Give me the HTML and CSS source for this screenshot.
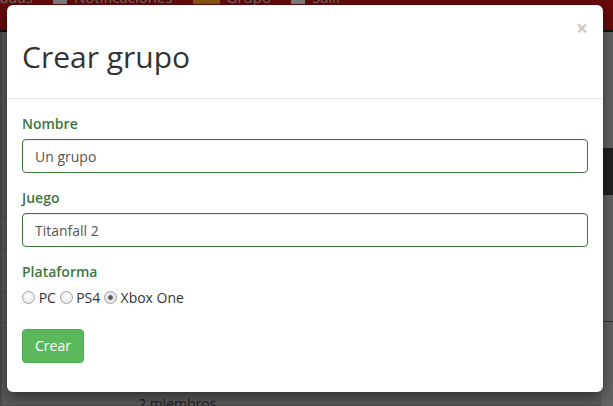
FILE: index.html
```html
<!DOCTYPE html>
<html lang="es">
<head>
<meta charset="utf-8">
<title>Crear grupo</title>
<link rel="stylesheet" href="styles.css">
</head>
<body>
<div class="page">
  <nav class="navbar">
    <ul class="nav-items">
      <li>adas</li>
      <li><span class="ico"></span>Notificaciones</li>
      <li><span class="ico gold"></span>Grupo</li>
      <li><span class="ico"></span>Salir</li>
    </ul>
  </nav>
  <div class="content">
    <div class="rows">
      <div class="row r1"></div>
      <div class="row r2"></div>
      <div class="row r3"></div>
      <div class="row r4"></div>
      <div class="row r5"><span class="members">2 miembros</span></div>
    </div>
    <div class="side">
      <div class="side-block"></div>
      <div class="side-line"></div>
    </div>
  </div>
</div>

<div class="modal">
  <div class="modal-header">
    <button class="close" type="button">&times;</button>
    <h2 class="modal-title">Crear grupo</h2>
  </div>
  <div class="modal-body">
    <div class="form-group">
      <label class="label">Nombre</label>
      <input class="form-control" type="text" value="Un grupo">
    </div>
    <div class="form-group">
      <label class="label">Juego</label>
      <input class="form-control" type="text" value="Titanfall 2">
    </div>
    <div class="form-group last">
      <label class="label">Plataforma</label>
      <div class="radios">
        <input type="radio" name="p"> PC <input type="radio" name="p"> PS4 <input type="radio" name="p" checked> Xbox One
      </div>
    </div>
    <button class="btn" type="button">Crear</button>
  </div>
</div>
</body>
</html>
```
FILE: styles.css
```css
html, body {
  margin: 0;
  padding: 0;
}
body {
  width: 613px;
  height: 406px;
  overflow: hidden;
  font-family: "Open Sans", "DejaVu Sans", sans-serif;
  font-size: 14px;
  line-height: 20px;
  color: #333;
  background: #5c5c5c;
  position: relative;
}
.page {
  display: flex;
  flex-direction: column;
  height: 406px;
}
.navbar {
  height: 30px;
  background: #680b0b;
  border-bottom: 2px solid #111;
  overflow: hidden;
}
.nav-items {
  list-style: none;
  margin: -13px 0 0 0;
  padding: 0;
  display: flex;
  gap: 20px;
  color: #6e6e6e;
  font-size: 15px;
}
.nav-items li {
  display: flex;
  align-items: center;
  gap: 7px;
}
.ico {
  display: inline-block;
  width: 14px;
  height: 14px;
  background: #808080;
}
.ico.gold {
  width: 27px;
  background: #8a5a10;
}
.content {
  flex: 1;
  display: flex;
}
.rows {
  flex: 1;
  display: flex;
  flex-direction: column;
  border-left: 2px solid #4a4a4a;
}
.row {
  border-bottom: 1px solid #4e4e4e;
}
.r1 { height: 185px; }
.r2 { height: 31px; }
.r3 { height: 41px; }
.r4 { height: 30px; }
.r5 {
  flex: 1;
  display: flex;
  align-items: flex-end;
}
.members {
  margin-left: 136px;
  color: #1e1e1e;
  font-size: 14px;
  line-height: 14px;
  margin-bottom: -6px;
}
.side {
  width: 10px;
  border-left: 1px solid #666;
  background: #646464;
  display: flex;
  flex-direction: column;
}
.side-block {
  margin-top: 116px;
  height: 47px;
  background: #222;
}
.side-line {
  margin-top: 126px;
  height: 1px;
  background: #7a1010;
}

.modal {
  position: absolute;
  left: 7px;
  top: 5px;
  width: 596px;
  height: 387px;
  background: #fff;
  border-radius: 6px;
  box-shadow: 0 5px 15px rgba(0, 0, 0, 0.5);
  box-sizing: border-box;
}
.modal-header {
  padding: 15px;
  border-bottom: 1px solid #e5e5e5;
}
.close {
  float: right;
  margin-top: -2px;
  padding: 0;
  border: 0;
  background: transparent;
  font-family: "Open Sans", "DejaVu Sans", sans-serif;
  font-size: 21px;
  font-weight: bold;
  line-height: 1;
  color: #000;
  opacity: 0.2;
  cursor: pointer;
}
.modal-title {
  margin: 20px 0 10px;
  font-size: 30px;
  font-weight: 400;
  line-height: 33px;
  color: #333;
}
.modal-body {
  padding: 15px;
}
.form-group {
  margin-bottom: 15px;
}
.form-group.last {
  margin-bottom: 22px;
}
.label {
  display: inline-block;
  margin-bottom: 5px;
  font-weight: 600;
  color: #3c763d;
}
.form-control {
  display: block;
  width: 100%;
  height: 34px;
  box-sizing: border-box;
  padding: 6px 12px;
  font-family: "Open Sans", "DejaVu Sans", sans-serif;
  font-size: 14px;
  line-height: 20px;
  color: #555;
  background: #fff;
  border: 1px solid #3c763d;
  border-radius: 4px;
  box-shadow: inset 0 1px 1px rgba(0, 0, 0, 0.075);
  outline: none;
}
.radios {
  height: 20px;
  color: #333;
}
.radios input {
  -webkit-appearance: none;
  appearance: none;
  box-sizing: border-box;
  margin: 4px 0 0 0;
  vertical-align: -1px;
  width: 13px;
  height: 13px;
  border: 1px solid #a3a3a3;
  border-radius: 50%;
  background: radial-gradient(circle at 50% 35%, #fdfdfd 0%, #e4e4e4 100%);
}
.radios input:checked {
  background: radial-gradient(circle, #555 0, #666 2px, #e6e6e6 2.8px, #eaeaea 100%);
}
.btn {
  display: inline-block;
  padding: 6px 12px;
  font-family: "Open Sans", "DejaVu Sans", sans-serif;
  font-size: 14px;
  line-height: 20px;
  color: #fff;
  background: #5cb85c;
  border: 1px solid #4cae4c;
  border-radius: 4px;
  cursor: pointer;
}
```
